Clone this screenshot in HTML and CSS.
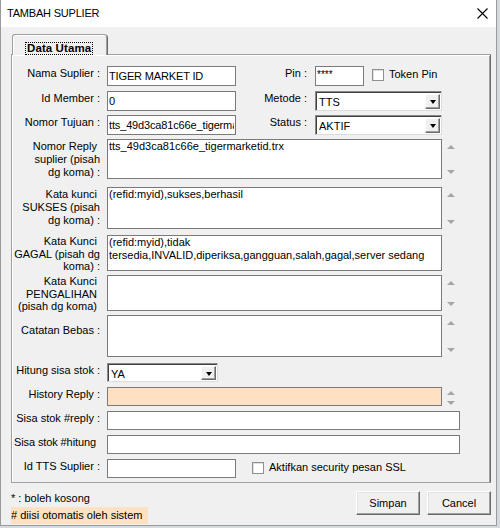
FILE: index.html
```
<!DOCTYPE html>
<html lang="id">
<head>
    <meta charset="UTF-8">
    <title>Tambah Suplier</title>
    <link rel="stylesheet" href="styles.css">
</head>
<body>
    <div class="window">
        <div class="titlebar">
            <span class="title">TAMBAH SUPLIER</span>
            <svg class="close" width="11" height="11" viewBox="0 0 11 11">
                <path d="M0.5 0.5 L10.5 10.5 M10.5 0.5 L0.5 10.5" stroke="#000" stroke-width="1.1" fill="none"/>
            </svg>
        </div>

        <div class="content">
            <div class="tabs">
                <div class="tab"><span class="tab-label">Data Utama</span></div>
            </div>

            <div class="panel">
                <div class="row">
                    <label class="lbl">Nama Suplier :</label>
                    <input class="field w-short" type="text" value="TIGER MARKET ID">
                    <label class="lbl-right">Pin :</label>
                    <input class="field w-pin" type="text" value="****">
                    <span class="check"></span>
                    <span class="check-text">Token Pin</span>
                </div>

                <div class="row">
                    <label class="lbl">Id Member :</label>
                    <input class="field w-short" type="text" value="0">
                    <label class="lbl-right">Metode :</label>
                    <div class="combo w-combo"><span class="combo-text">TTS</span><span class="combo-btn"><i class="arrow"></i></span></div>
                </div>

                <div class="row tight">
                    <label class="lbl">Nomor Tujuan :</label>
                    <input class="field w-short" type="text" value="tts_49d3ca81c66e_tigermarketid">
                    <label class="lbl-right">Status :</label>
                    <div class="combo w-combo"><span class="combo-text">AKTIF</span><span class="combo-btn"><i class="arrow"></i></span></div>
                </div>

                <div class="row tight h-40">
                    <label class="lbl">Nomor Reply&nbsp;<br>suplier (pisah<br>dg koma) :</label>
                    <textarea class="memo">tts_49d3ca81c66e_tigermarketid.trx</textarea>
                    <div class="spin"><i class="up"></i><i class="down"></i></div>
                </div>

                <div class="row wider h-42">
                    <label class="lbl">Kata kunci&nbsp;<br>SUKSES (pisah<br>dg koma) :</label>
                    <textarea class="memo">(refid:myid),sukses,berhasil</textarea>
                    <div class="spin"><i class="up"></i><i class="down"></i></div>
                </div>

                <div class="row wide h-36">
                    <label class="lbl lbl-dense">Kata Kunci&nbsp;<br>GAGAL (pisah dg<br>koma) :</label>
                    <textarea class="memo">(refid:myid),tidak
tersedia,INVALID,diperiksa,gangguan,salah,gagal,server sedang</textarea>
                </div>

                <div class="row tight h-36">
                    <label class="lbl lbl-dense">Kata Kunci&nbsp;<br>PENGALIHAN&nbsp;<br>(pisah dg koma)&nbsp;</label>
                    <textarea class="memo"></textarea>
                    <div class="spin"><i class="up"></i><i class="down"></i></div>
                </div>

                <div class="row tight h-42">
                    <label class="lbl lbl-mid">Catatan Bebas :</label>
                    <textarea class="memo"></textarea>
                    <div class="spin"><i class="up"></i><i class="down"></i></div>
                </div>

                <div class="row wide">
                    <label class="lbl">Hitung sisa stok :</label>
                    <div class="combo w-stok"><span class="combo-text">YA</span><span class="combo-btn"><i class="arrow"></i></span></div>
                </div>

                <div class="row">
                    <label class="lbl">History Reply :</label>
                    <input class="field w-memo auto-fill" type="text" value="">
                    <div class="spin small"><i class="up"></i><i class="down"></i></div>
                </div>

                <div class="row">
                    <label class="lbl">Sisa stok #reply :</label>
                    <input class="field w-long" type="text" value="">
                </div>

                <div class="row">
                    <label class="lbl lbl-wide">Sisa stok #hitung</label>
                    <input class="field w-long" type="text" value="">
                </div>

                <div class="row">
                    <label class="lbl">Id TTS Suplier :</label>
                    <input class="field w-short" type="text" value="">
                    <span class="check ssl"></span>
                    <span class="check-text">Aktifkan security pesan SSL</span>
                </div>
            </div>

            <div class="footer">
                <div class="notes">
                    <div class="note">* : boleh kosong</div>
                    <div class="note auto-note"># diisi otomatis oleh sistem</div>
                </div>
                <div class="buttons">
                    <button class="btn">Simpan</button>
                    <button class="btn">Cancel</button>
                </div>
            </div>
        </div>
    </div>
</body>
</html>
```

FILE: styles.css
```
* {
    box-sizing: border-box;
}
body {
    margin: 0;
    background-color: #d5dae1;
    font-family: "Liberation Sans", Arial, sans-serif;
    font-size: 11px;
    color: #000;
}
.window {
    width: 497px;
    height: 526px;
    background-color: #f0f0f0;
    border: 1px solid #9a9a9a;
    border-top: none;
    display: flex;
    flex-direction: column;
}
.titlebar {
    height: 27px;
    flex: none;
    background-color: #fff;
    display: flex;
    align-items: center;
    justify-content: space-between;
    padding: 0 8px 1px 6px;
}
.title {
    font-size: 11px;
    letter-spacing: -0.2px;
}
.close {
    display: block;
}
.content {
    flex: 1;
    padding: 7px 5px 0 10px;
}

/* tab */
.tabs {
    display: flex;
    padding-left: 1px;
}
.tab {
    position: relative;
    z-index: 1;
    width: 96px;
    height: 21px;
    margin-bottom: -1px;
    background-color: #f0f0f0;
    border: 1px solid #a0a0a0;
    border-right-color: #696969;
    border-bottom: none;
    border-radius: 3px 4px 0 0;
    box-shadow: inset 1px 1px #fff, inset -1px 0 #a0a0a0;
    padding: 7px 0 0 13px;
}
.tab-label {
    display: inline-block;
    font-weight: bold;
    line-height: 11px;
    padding: 0 1px;
    outline: 1px dotted #000;
    font-size: 11.5px;
    letter-spacing: 0.1px;
}

/* panel */
.panel {
    width: 480px;
    border: 1px solid #a0a0a0;
    border-right-color: #696969;
    border-bottom-color: #a0a0a0;
    box-shadow: inset 1px 1px #fff, inset -1px 0 #a0a0a0;
    padding: 11px 0 4px 0;
}
.row {
    display: flex;
    align-items: flex-start;
    height: 20px;
    margin-top: 5px;
}
.row:first-child {
    margin-top: 0;
}
.row.tight {
    margin-top: 4px;
}
.row.wide {
    margin-top: 6px;
}
.row.wider {
    margin-top: 8px;
}
.row.h-36 {
    height: 36px;
}
.row.h-40 {
    height: 40px;
}
.row.h-42 {
    height: 42px;
}
.row:nth-last-child(-n+5) {
    height: 19px;
}
.lbl {
    flex: none;
    width: 88px;
    margin-right: 7px;
    text-align: right;
    line-height: 13px;
    padding-top: 1px;
    white-space: nowrap;
}
.lbl-dense {
    line-height: 12.5px;
    padding-top: 0;
}
.lbl-mid {
    padding-top: 9px;
}
.lbl-wide {
    padding-right: 4px;
    letter-spacing: -0.1px;
}
.lbl-right {
    flex: none;
    width: 71px;
    margin-right: 8px;
    text-align: right;
    line-height: 13px;
    padding-top: 1px;
}
.field {
    height: 100%;
    margin: 0;
    border: 1px solid #7a7a7a;
    background-color: #fff;
    padding: 0 1px;
    font-family: inherit;
    font-size: 11px;
    color: #000;
    outline: none;
}
.w-short {
    width: 129px;
    letter-spacing: -0.15px;
}
.w-pin {
    width: 49px;
    font-size: 10px;
    padding-bottom: 3px;
}
.w-memo {
    width: 335px;
}
.w-long {
    width: 353px;
}
.auto-fill {
    background-color: #fde1c2;
}
.memo {
    width: 335px;
    height: 100%;
    margin: 0;
    border: 1px solid #7a7a7a;
    background-color: #fff;
    padding: 0 1px;
    font-family: inherit;
    font-size: 11px;
    line-height: 13px;
    color: #000;
    resize: none;
    overflow: hidden;
    white-space: pre;
    outline: none;
}

/* spinner arrows next to memos */
.spin {
    width: 18px;
    height: 100%;
    display: flex;
    flex-direction: column;
    justify-content: space-between;
    align-items: center;
    padding: 6px 0 5px;
}
.spin.small {
    justify-content: flex-start;
    gap: 6px;
    padding: 4px 0 0;
}
.up, .down {
    display: block;
    width: 0;
    height: 0;
    border-left: 4px solid transparent;
    border-right: 4px solid transparent;
}
.up {
    border-bottom: 4px solid #a6a6a6;
}
.down {
    border-top: 4px solid #a6a6a6;
}

/* combo box */
.combo {
    height: 100%;
    display: flex;
    align-items: stretch;
    background-color: #fff;
    border: 1px solid #8a8a8a;
    border-right-color: #dcdcdc;
    border-bottom-color: #dcdcdc;
    box-shadow: inset 1px 1px #404040;
    padding: 2px 1px 1px 2px;
}
.w-combo {
    width: 127px;
}
.w-stok {
    width: 111px;
    height: 19px;
}
.combo-text {
    flex: 1;
    line-height: 15px;
    padding-left: 1px;
    padding-top: 1px;
}
.combo-btn {
    width: 15px;
    background-color: #f0f0f0;
    border: 1px solid #fff;
    border-right-color: #696969;
    border-bottom-color: #696969;
    box-shadow: inset -1px -1px #a0a0a0;
    display: flex;
    align-items: center;
    justify-content: center;
}
.arrow {
    display: block;
    width: 0;
    height: 0;
    border-left: 3px solid transparent;
    border-right: 3px solid transparent;
    border-top: 4px solid #000;
    margin-top: 1px;
}

/* checkbox */
.check {
    flex: none;
    width: 12px;
    height: 12px;
    margin: 3px 5px 0 8px;
    background-color: #fff;
    border: 1px solid #8e8f8f;
    box-shadow: inset 1px 1px #e0e0e0;
}
.check.ssl {
    margin-left: 16px;
}
.check-text {
    line-height: 13px;
    padding-top: 2px;
}

/* footer */
.footer {
    display: flex;
    justify-content: space-between;
    align-items: flex-start;
    padding-top: 7px;
    width: 480px;
}
.note {
    line-height: 16px;
}
.auto-note {
    width: 137px;
    line-height: 17px;
    margin-top: 1px;
    background-color: #fde1c2;
}
.buttons {
    display: flex;
    gap: 7px;
    margin-top: 1px;
}
.btn {
    width: 64px;
    height: 24px;
    margin: 0;
    background-color: #f0f0f0;
    border: 1px solid #fff;
    border-right-color: #696969;
    border-bottom-color: #696969;
    box-shadow: inset -1px -1px #a0a0a0, inset 1px 1px #e3e3e3;
    font-family: inherit;
    font-size: 11px;
    color: #000;
    padding: 0;
}
```
